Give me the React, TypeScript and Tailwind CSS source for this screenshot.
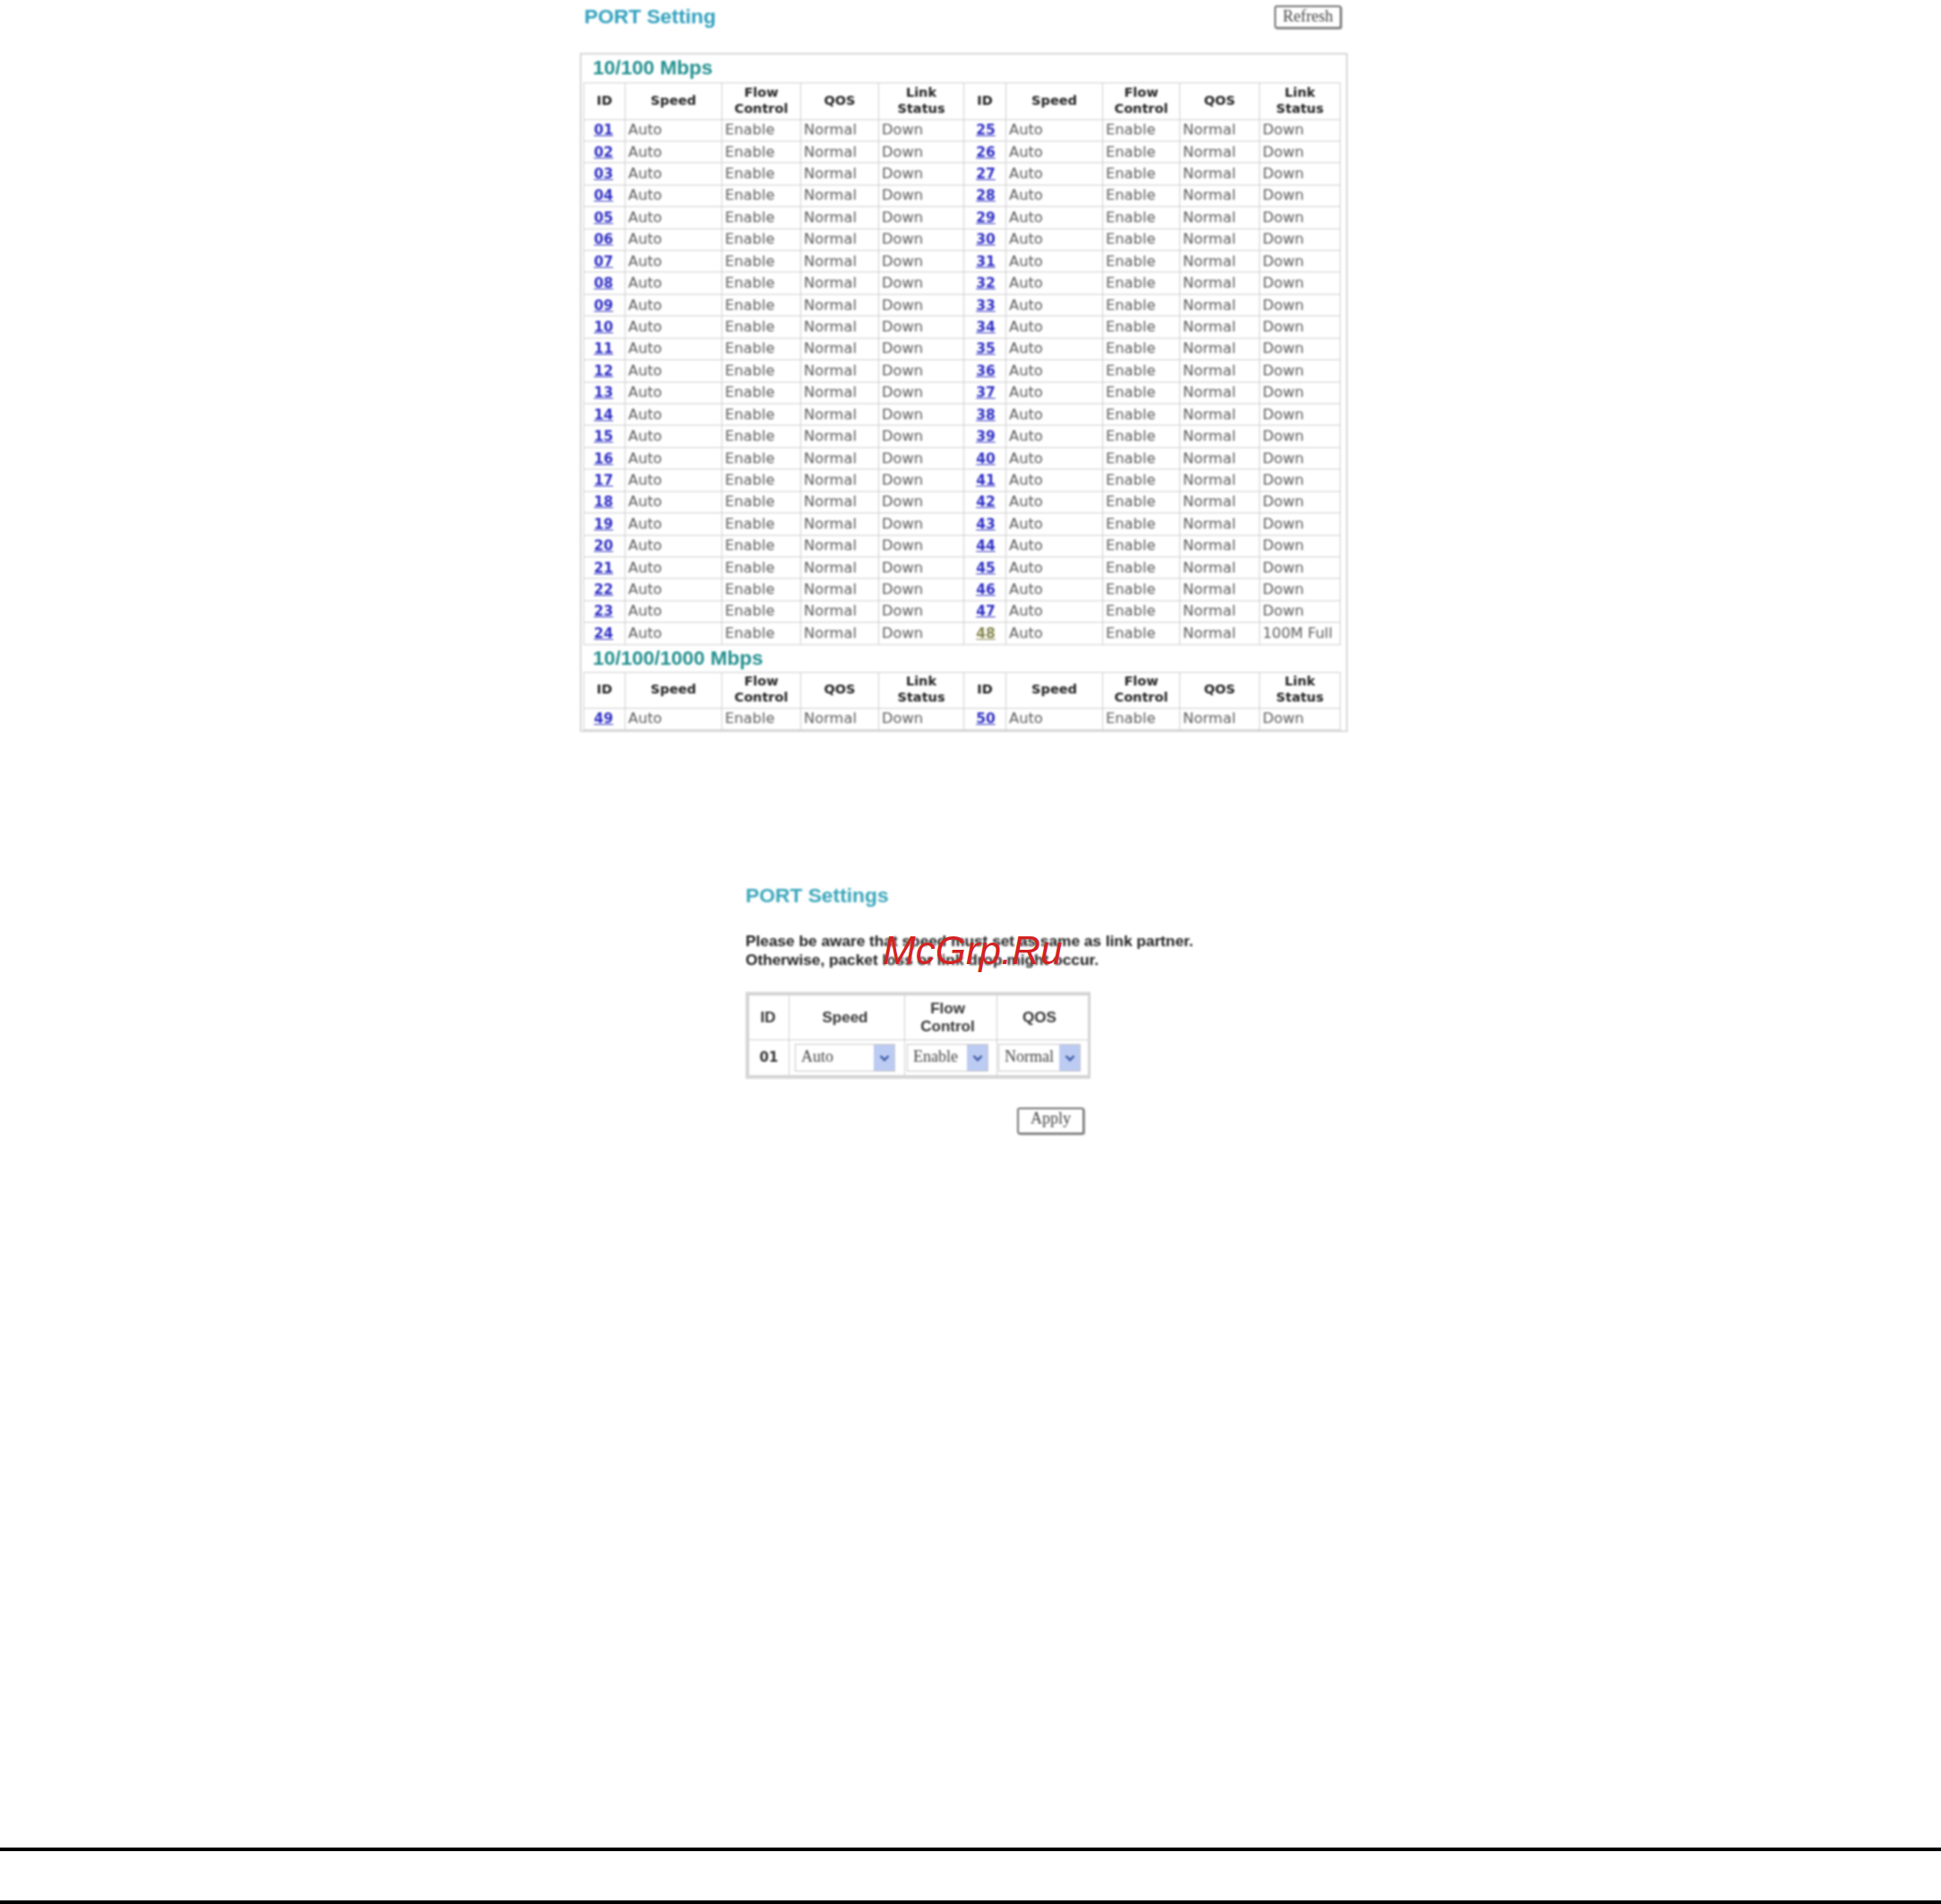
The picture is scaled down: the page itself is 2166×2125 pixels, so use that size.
import React from 'react';

const headers = ['ID', 'Speed', 'Flow Control', 'QOS', 'Link Status'];
const colWidths = ['w-[46px]', 'w-[108px]', 'w-[88px]', 'w-[87px]', 'w-[95px]', 'w-[47px]', 'w-[108px]', 'w-[86px]', 'w-[89px]', 'w-[90px]'];

const pad = (n: number) => String(n).padStart(2, '0');

const HeaderCells: React.FC = () => (
  <>
    {[...headers, ...headers].map((h, i) => (
      <th key={i} className="border border-[#cfcfcf] px-0 pb-[2px] text-center align-middle text-[14.5px] leading-[18px] font-bold text-[#222]">
        {h.includes(' ') ? (
          <>
            {h.split(' ')[0]}
            <br />
            {h.split(' ')[1]}
          </>
        ) : (
          h
        )}
      </th>
    ))}
  </>
);

const PortCells: React.FC<{ id: number; status?: string; olive?: boolean; right?: boolean }> = ({ id, status = 'Down', olive, right }) => (
  <>
    <td className={`border border-[#cfcfcf] text-center ${right ? 'pl-[2px]' : 'pr-[2px]'}`}>
      <a className={`text-[15.5px] font-bold underline ${olive ? 'text-[#87874f]' : 'text-[#2f2fc4]'}`}>{pad(id)}</a>
    </td>
    <td className="border border-[#cfcfcf] pl-[3px]">Auto</td>
    <td className="border border-[#cfcfcf] pl-[3px]">Enable</td>
    <td className="border border-[#cfcfcf] pl-[3px]">Normal</td>
    <td className="border border-[#cfcfcf] pl-[3px] whitespace-nowrap">{status}</td>
  </>
);

const SectionRow: React.FC<{ title: string }> = ({ title }) => (
  <tr className="h-[31px]">
    <td colSpan={10} className="pl-[10px] font-['Liberation_Sans',sans-serif] text-[22.5px] leading-[26px] font-bold text-[#23908f]">
      {title}
    </td>
  </tr>
);

const PortSelect: React.FC<{ value: string; w: string }> = ({ value, w }) => (
  <div className={`flex h-[31px] items-center justify-between border border-[#c8c8c8] bg-white ${w}`}>
    <span className="pb-[3px] pl-[6px] font-['Liberation_Serif',serif] text-[18px] text-[#444]">{value}</span>
    <span className="flex h-full w-[23px] items-center justify-center bg-[#bccbf2]">
      <svg width="12" height="8" viewBox="0 0 12 8" fill="none">
        <path d="M1.5 1.5 6 6l4.5-4.5" stroke="#3d5aa8" strokeWidth="2.4" />
      </svg>
    </span>
  </div>
);

const OldButton: React.FC<{ label: string; w: string; h: string }> = ({ label, w, h }) => (
  <button className={`flex justify-center rounded-[3px] border-2 border-[#767676] bg-white font-['Liberation_Serif',serif] text-[18px] leading-[20px] text-[#444] shadow-[1px_1px_0_#aaa] ${w} ${h}`}>
    {label}
  </button>
);

export default function App() {
  const rows = Array.from({ length: 24 }, (_, i) => i + 1);

  return (
    <div className="relative flex h-[2125px] w-[2166px] flex-col overflow-hidden bg-white">
      <div className="flex flex-col blur-[1px]">
        {/* Port list */}
        <div className="ml-[647px] flex h-[59px] w-[855px] items-start justify-between pr-[5px] pl-[5px]">
          <h1 className="mt-[5px] font-['Liberation_Sans',sans-serif] text-[22.8px] leading-[26px] font-bold text-[#2fa0bd]">PORT Setting</h1>
          <OldButton label="Refresh" w="w-[75px]" h="mt-[6px] h-[26px]" />
        </div>
        <div className="ml-[647px] w-[857px] border-2 border-[#d8d8d8] pr-[5px] pl-[2px]">
          <table className="w-[844px] table-fixed border-collapse font-['DejaVu_Sans',sans-serif] text-[16.3px] leading-[18px] text-[#5c5c5c]">
            <colgroup>
              {colWidths.map((c, i) => (
                <col key={i} className={c} />
              ))}
            </colgroup>
            <tbody>
              <SectionRow title="10/100 Mbps" />
              <tr className="h-[41px]">
                <HeaderCells />
              </tr>
              {rows.map((n) => (
                <tr key={n} className="h-[24.43px]">
                  <PortCells id={n} />
                  <PortCells id={n + 24} status={n === 24 ? '100M Full' : 'Down'} olive={n === 24} right />
                </tr>
              ))}
              <SectionRow title="10/100/1000 Mbps" />
              <tr className="h-[40px]">
                <HeaderCells />
              </tr>
              <tr className="h-[24.43px]">
                <PortCells id={49} />
                <PortCells id={50} right />
              </tr>
            </tbody>
          </table>
        </div>

        {/* Single port form */}
        <div className="mt-[169px] ml-[832px] flex w-[520px] flex-col">
          <h2 className="font-['Liberation_Sans',sans-serif] text-[22.8px] leading-[26px] font-bold text-[#3aa6bb]">PORT Settings</h2>
          <p className="mt-[28px] font-['Liberation_Sans',sans-serif] text-[17.25px] leading-[21px] font-bold text-[#1c1c1c]">
            Please be aware that speed must set as same as link partner.
            <br />
            Otherwise, packet loss or link drop might occur.
          </p>
          <div className="mt-[25px] w-[385px] border-[3px] border-[#d6d6d6]">
            <table className="w-[379px] table-fixed border-collapse text-[#333]">
              <colgroup>
                <col className="w-[45px]" />
                <col className="w-[129px]" />
                <col className="w-[103px]" />
                <col className="w-[102px]" />
              </colgroup>
              <tbody>
                <tr className="h-[50px] font-['Liberation_Sans',sans-serif] text-[17px] leading-[20px] font-bold">
                  <th className="border border-[#cfcfcf] pr-[2px] font-bold">ID</th>
                  <th className="border border-[#cfcfcf] pr-[4px] font-bold">Speed</th>
                  <th className="border border-[#cfcfcf] pr-[7px] font-bold">
                    Flow
                    <br />
                    Control
                  </th>
                  <th className="border border-[#cfcfcf] pr-[7px] font-bold">QOS</th>
                </tr>
                <tr className="h-[40px]">
                  <td className="border border-[#cfcfcf] text-center font-['DejaVu_Sans',sans-serif] text-[15px] font-bold">01</td>
                  <td className="border border-[#cfcfcf] pl-[6px]">
                    <PortSelect value="Auto" w="w-[112px]" />
                  </td>
                  <td className="border border-[#cfcfcf] pl-[2px]">
                    <PortSelect value="Enable" w="w-[91px]" />
                  </td>
                  <td className="border border-[#cfcfcf] pl-[1px]">
                    <PortSelect value="Normal" w="w-[92px]" />
                  </td>
                </tr>
              </tbody>
            </table>
          </div>
          <div className="mt-[32px] flex w-[378px] justify-end">
            <OldButton label="Apply" w="w-[75px]" h="h-[30px]" />
          </div>
        </div>
      </div>

      {/* Watermark sits over the scan */}
      <span className="absolute top-[1036px] left-[985px] font-['Liberation_Sans',sans-serif] text-[44px] leading-[50px] text-[#d42222] italic">McGrp.Ru</span>

      {/* Page rules */}
      <div className="mt-auto flex flex-col">
        <div className="h-[4px] bg-black" />
        <div className="mt-[55px] h-[4px] bg-black" />
      </div>
    </div>
  );
}
